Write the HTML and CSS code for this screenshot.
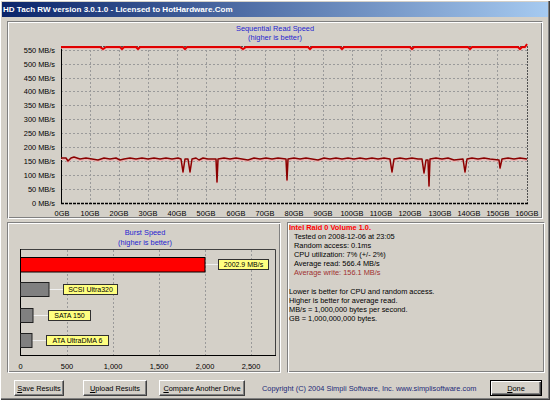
FILE: index.html
```html
<!DOCTYPE html>
<html>
<head>
<meta charset="utf-8">
<link rel="stylesheet" href="styles.css">
</head>
<body>
<div class="window">
  <div class="titlebar">HD Tach RW version 3.0.1.0 - Licensed to HotHardware.Com</div>

  <div class="top-panel etched">
    <svg class="chart" width="534" height="196" viewBox="8 22 534 196">
      <text class="ctitle" x="275" y="30.7">Sequential Read Speed</text>
      <text class="ctitle" x="275" y="39.7">(higher is better)</text>
      <g class="grid">
        <path d="M61 50.5H527M61 64.5H527M61 78.5H527M61 91.5H527M61 105.5H527M61 119.5H527M61 133.5H527M61 147.5H527M61 161.5H527M61 175.5H527M61 189.5H527"/>
        <path d="M90.5 46V203M119.5 46V203M148.5 46V203M177.5 46V203M206.5 46V203M235.5 46V203M265.5 46V203M294.5 46V203M323.5 46V203M352.5 46V203M381.5 46V203M410.5 46V203M439.5 46V203M468.5 46V203M497.5 46V203"/>
      </g>
      <path class="frame-dash" d="M527.5 46V203M61 46.5H527"/>
      <path class="axis-dash" d="M61 203.5H528"/>
      <path class="axis" d="M61.5 46V204"/>
      <g class="ylab">
        <text x="55" y="52.7">550 MB/s</text>
        <text x="55" y="66.6">500 MB/s</text>
        <text x="55" y="80.5">450 MB/s</text>
        <text x="55" y="94.4">400 MB/s</text>
        <text x="55" y="108.3">350 MB/s</text>
        <text x="55" y="122.2">300 MB/s</text>
        <text x="55" y="136.1">250 MB/s</text>
        <text x="55" y="150">200 MB/s</text>
        <text x="55" y="163.9">150 MB/s</text>
        <text x="55" y="177.8">100 MB/s</text>
        <text x="55" y="191.7">50 MB/s</text>
        <text x="55" y="205.6">0 MB/s</text>
      </g>
      <g class="xlab">
        <text x="62" y="215.5">0GB</text>
        <text x="90" y="215.5">10GB</text>
        <text x="119" y="215.5">20GB</text>
        <text x="148" y="215.5">30GB</text>
        <text x="177" y="215.5">40GB</text>
        <text x="206" y="215.5">50GB</text>
        <text x="236" y="215.5">60GB</text>
        <text x="265" y="215.5">70GB</text>
        <text x="294" y="215.5">80GB</text>
        <text x="323" y="215.5">90GB</text>
        <text x="352" y="215.5">100GB</text>
        <text x="381" y="215.5">110GB</text>
        <text x="410" y="215.5">120GB</text>
        <text x="440" y="215.5">130GB</text>
        <text x="469" y="215.5">140GB</text>
        <text x="498" y="215.5">150GB</text>
        <text x="527" y="215.5">160GB</text>
      </g>
      <path class="read-glow" d="M61 48L100 48L103 50L106 48L120 48L122 50L124 48L136 48L138 50L140 48L183 48L185 50L187 48L240 48L243 50L246 48L308 48L310 50L312 48L340 48L342 50L344 48L410 48L412 50L414 48L468 48L470 50L472 48L518 48L520 50L522 48L525 48L527 45"/>
      <path class="read" d="M61 47L100 47L103 49L106 47L120 47L122 49L124 47L136 47L138 49L140 47L183 47L185 49L187 47L240 47L243 49L246 47L308 47L310 49L312 47L340 47L342 49L344 47L410 47L412 49L414 47L468 47L470 49L472 47L518 47L520 49L522 47L525 47L527 44"/>
      <path class="write-glow" d="M61 159.5L66 159.5L68 162.5L71 159.5L74 158.5L80 160.5L86 159.5L92 160.5L98 161.5L104 159.5L110 160.5L116 159.5L120 161.5L124 160.5L130 159.5L136 160.5L142 159.5L148 160.5L154 159.5L160 160.5L166 159.5L172 160.5L178 159.5L181 160.5L183 173.5L185 160.5L188 160.5L190 173.5L192 160.5L196 159.5L199 161.5L203 159.5L208 160.5L216 160.5L217 183.5L218 160.5L224 159.5L230 160.5L236 159.5L242 160.5L248 161.5L254 159.5L260 160.5L266 159.5L272 160.5L278 159.5L286 160.5L287 181.5L288 160.5L294 159.5L300 160.5L306 159.5L312 160.5L318 161.5L324 159.5L330 160.5L336 159.5L342 160.5L348 159.5L354 160.5L360 159.5L366 160.5L372 159.5L378 160.5L384 159.5L390 160.5L392 173.5L394 160.5L400 159.5L406 160.5L412 159.5L418 160.5L422 160.5L424 174.5L426 161.5L428 161.5L429 187.5L430 160.5L436 159.5L442 160.5L448 159.5L454 161.5L463 160.5L465 173.5L467 160.5L472 159.5L478 160.5L484 159.5L490 160.5L499 161.5L500 169.5L502 160.5L508 159.5L514 160.5L520 159.5L527 160.5"/>
      <path class="write" d="M61 158L66 158L68 161L71 158L74 157L80 159L86 158L92 159L98 160L104 158L110 159L116 158L120 160L124 159L130 158L136 159L142 158L148 159L154 158L160 159L166 158L172 159L178 158L181 159L183 172L185 159L188 159L190 172L192 159L196 158L199 160L203 158L208 159L216 159L217 182L218 159L224 158L230 159L236 158L242 159L248 160L254 158L260 159L266 158L272 159L278 158L286 159L287 180L288 159L294 158L300 159L306 158L312 159L318 160L324 158L330 159L336 158L342 159L348 158L354 159L360 158L366 159L372 158L378 159L384 158L390 159L392 172L394 159L400 158L406 159L412 158L418 159L422 159L424 173L426 160L428 160L429 186L430 159L436 158L442 159L448 158L454 160L463 159L465 172L467 159L472 158L478 159L484 158L490 159L499 160L500 168L502 159L508 158L514 159L520 158L527 159"/>
    </svg>
  </div>

  <div class="mid">
    <div class="burst etched">
      <svg class="chart" width="272" height="149" viewBox="8 223 272 149">
        <text class="ctitle" x="145" y="234.7">Burst Speed</text>
        <text class="ctitle" x="145" y="244.5">(higher is better)</text>
        <path class="grid" d="M67.5 250V355M113.5 250V355M159.5 250V355M205.5 250V355M251.5 250V355"/>
        <path class="pframe" d="M20 249.5H275.5V355"/>
        <path class="axis" d="M20.5 249V356M20 355.5H276"/>
        <path class="conn" d="M205 264.5H218M49 289.5H63M33 315.5H48M32 340.5H46"/>
        <rect class="bar-red" x="20.5" y="257.5" width="184.5" height="14.5"/>
        <rect class="bar-gray" x="20.5" y="282.5" width="28.5" height="14"/>
        <rect class="bar-gray" x="20.5" y="308.5" width="12.5" height="14"/>
        <rect class="bar-gray" x="20.5" y="333.5" width="11.5" height="14"/>
        <rect class="tag" x="218.5" y="259.5" width="50" height="10"/>
        <rect class="tag" x="63.5" y="284.5" width="54" height="10"/>
        <rect class="tag" x="48.5" y="310.5" width="42" height="10"/>
        <rect class="tag" x="46.5" y="335.5" width="62" height="10"/>
        <g class="tagtxt">
          <text x="243.5" y="267.3">2002.9 MB/s</text>
          <text x="90.5" y="292.3">SCSI Ultra320</text>
          <text x="69.5" y="318.3">SATA 150</text>
          <text x="77.5" y="343.3">ATA UltraDMA 6</text>
        </g>
        <g class="xlab">
          <text x="20.5" y="368.6">0</text>
          <text x="67" y="368.6">500</text>
          <text x="113" y="368.6">1,000</text>
          <text x="159" y="368.6">1,500</text>
          <text x="205" y="368.6">2,000</text>
          <text x="251" y="368.6">2,500</text>
        </g>
      </svg>
    </div>
    <div class="info etched">
      <div class="hd">Intel Raid 0 Volume 1.0.</div>
      <div class="ind">Tested on 2008-12-06 at 23:05</div>
      <div class="ind">Random access: 0.1ms</div>
      <div class="ind">CPU utilization: 7% (+/- 2%)</div>
      <div class="ind">Average read: 566.4 MB/s</div>
      <div class="ind write-txt">Average write: 156.1 MB/s</div>
      <div class="gap"></div>
      <div>Lower is better for CPU and random access.</div>
      <div>Higher is better for average read.</div>
      <div>MB/s = 1,000,000 bytes per second.</div>
      <div>GB = 1,000,000,000 bytes.</div>
    </div>
  </div>

  <div class="buttons">
    <div class="btn b-save"><span><u>S</u>ave Results</span></div>
    <div class="btn b-upload"><span><u>U</u>pload Results</span></div>
    <div class="btn b-compare"><span><u>C</u>ompare Another Drive</span></div>
    <div class="copyright">Copyright (C) 2004 Simpli Software, Inc. www.simplisoftware.com</div>
    <div class="btn b-done"><span><u>D</u>one</span></div>
  </div>
</div>
</body>
</html>
```

FILE: styles.css
```css
* { box-sizing: border-box; }
html, body { margin: 0; padding: 0; }
body {
  background: #d4d0c8;
  font-family: "Liberation Sans", Arial, sans-serif;
  font-size: 7.4px;
  color: #000;
}
.window {
  width: 550px;
  height: 400px;
  padding: 2px;
  display: flex;
  flex-direction: column;
  background: #d4d0c8;
  box-shadow: inset 1px 1px #ffffff, inset -1px -1px #404040, inset -2px -2px #808080;
}
.titlebar {
  height: 15px;
  flex: none;
  background: linear-gradient(to right, #0a246a, #a6caf0);
  color: #fff;
  font-weight: bold;
  font-size: 8.05px;
  padding-left: 1px;
  display: flex;
  align-items: center;
}
.etched {
  border: 1px solid;
  border-color: #808080 #ffffff #ffffff #808080;
  box-shadow: inset 1px 1px #ffffff, inset -1px -1px #808080;
}
.top-panel {
  flex: none;
  margin: 4px 0 0 5px;
  width: 536px;
  height: 198px;
}
.chart { display: block; }
.chart text { font-family: "Liberation Sans", Arial, sans-serif; font-size: 7.4px; }
.ctitle { fill: #2424d0; text-anchor: middle; }
.grid { fill: none; stroke: #9a9a9a; stroke-width: 1; stroke-dasharray: 2 2; }
.grid path { fill: none; }
.frame-dash { fill: none; stroke: #505050; stroke-width: 1; stroke-dasharray: 2 1; }
.axis-dash { fill: none; stroke: #000; stroke-width: 1.4; stroke-dasharray: 3 1; }
.axis { fill: none; stroke: #000; stroke-width: 1; }
.pframe { fill: none; stroke: #404040; stroke-width: 1; }
.ylab text { text-anchor: end; fill: #000; }
.xlab text { text-anchor: middle; fill: #000; }
.read-glow { fill: none; stroke: #f4a0a0; stroke-width: 1.5; }
.read { fill: none; stroke: #e00000; stroke-width: 2; stroke-linejoin: round; }
.write-glow { fill: none; stroke: #f0b0b0; stroke-width: 1.2; }
.write { fill: none; stroke: #8b0000; stroke-width: 1.5; stroke-linejoin: round; }
.conn { fill: none; stroke: #f0f0f0; stroke-width: 1; }
.bar-red { fill: #ff0000; stroke: #000; stroke-width: 1; }
.bar-gray { fill: #808080; stroke: #202020; stroke-width: 1; }
.tag { fill: #ffff80; stroke: #303030; stroke-width: 1; }
.tagtxt text { text-anchor: middle; fill: #000; font-size: 7px; }

.mid {
  flex: none;
  display: flex;
  gap: 6px;
  margin: 3px 0 0 5px;
  height: 151px;
}
.burst { width: 274px; height: 151px; }
.info {
  width: 258px;
  height: 151px;
  padding: 0 0 0 1px;
  line-height: 9.1px;
}
.info .hd { color: #ff0000; font-weight: bold; }
.info .ind { padding-left: 5px; }
.info .write-txt { color: #a03030; }
.info .gap { height: 9.1px; }

.buttons {
  flex: none;
  display: flex;
  align-items: center;
  margin: 7px 6px 0 12px;
  height: 16px;
}
.btn {
  height: 16px;
  border: 1px solid;
  border-color: #ffffff #404040 #404040 #ffffff;
  box-shadow: inset -1px -1px #808080;
  display: flex;
  align-items: center;
  justify-content: center;
  font-size: 7.4px;
}
.btn u { text-decoration: underline; }
.b-save { width: 50px; }
.b-upload { width: 64px; margin-left: 19px; }
.b-compare { width: 86px; margin-left: 12px; }
.copyright { margin-left: 17px; color: #1c2a78; }
.b-done {
  width: 52px;
  margin-left: auto;
  border: 1px solid #000;
  box-shadow: inset 1px 1px #ffffff, inset -1px -1px #404040, inset -2px -2px #808080;
}
```
